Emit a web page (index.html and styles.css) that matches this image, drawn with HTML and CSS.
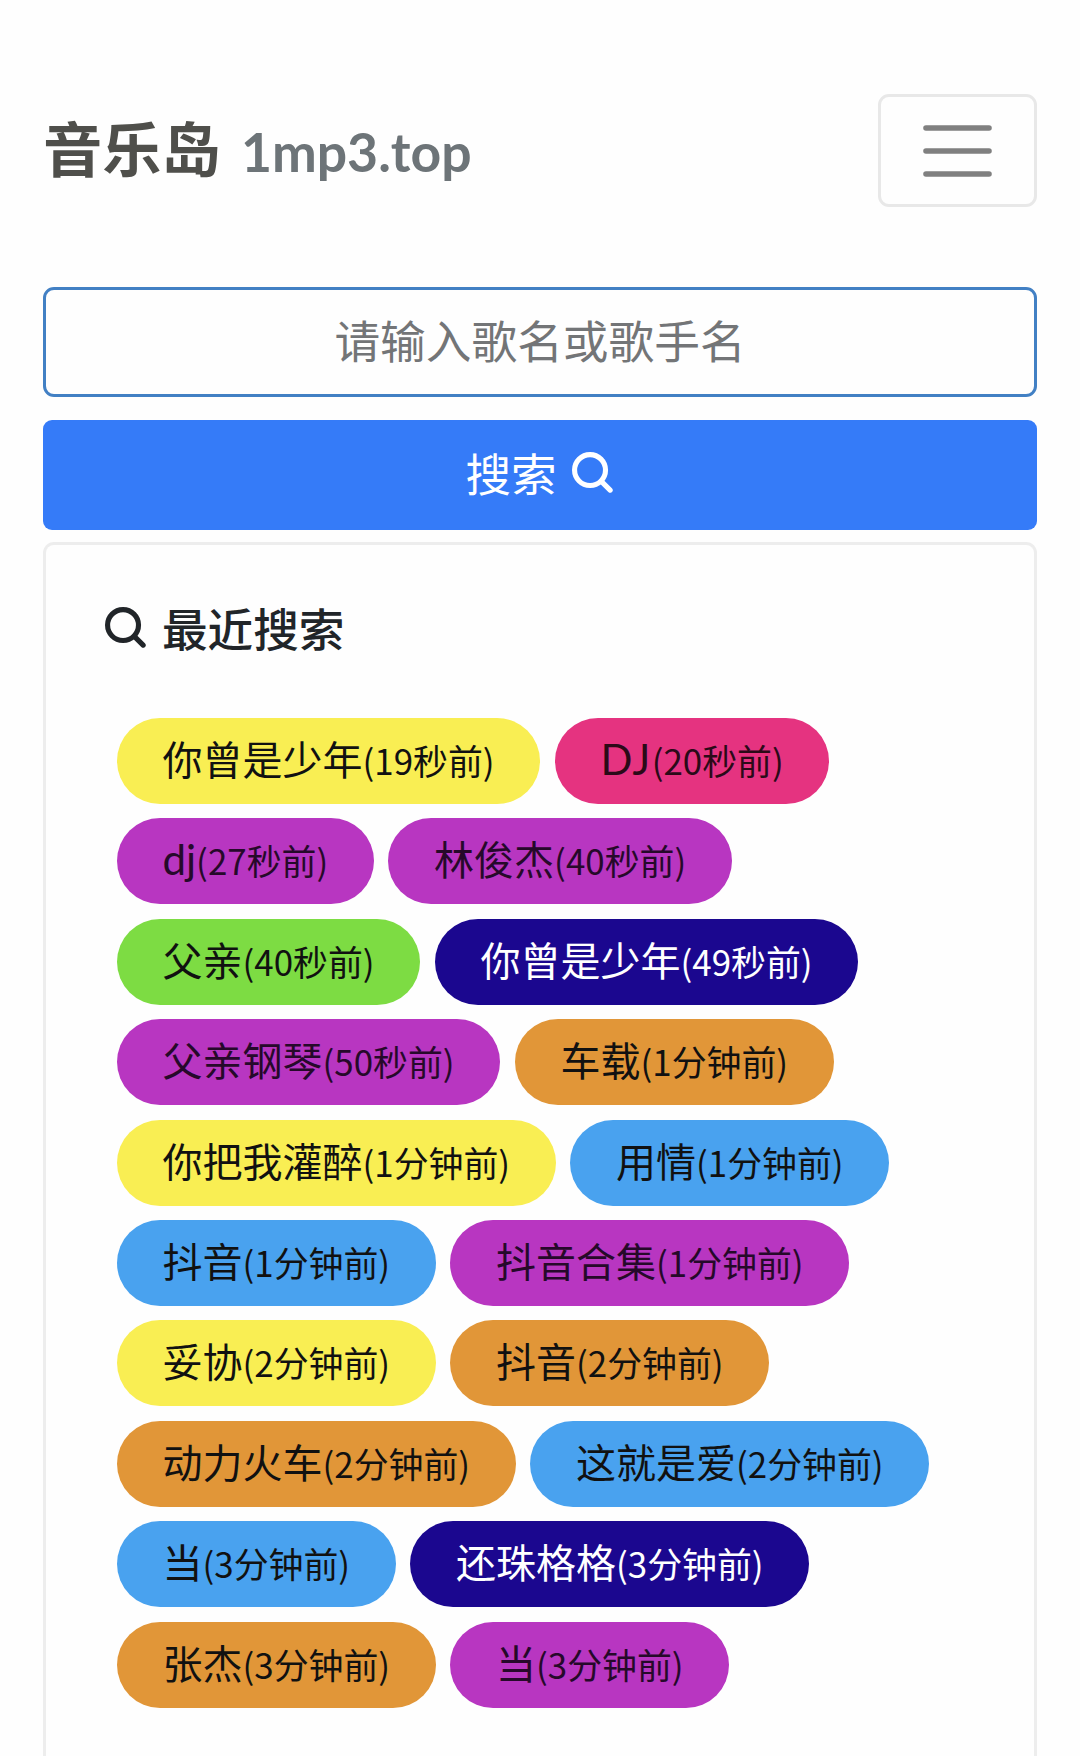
FILE: index.html
```html
<!DOCTYPE html>
<html lang="zh-CN">
<head>
<meta charset="utf-8">
<title>音乐岛 1mp3.top</title>
<link rel="stylesheet" href="styles.css">
</head>
<body>
<header class="navbar">
  <a class="brand"><span class="brand-name">音乐岛</span><span class="brand-domain">1mp3.top</span></a>
  <button class="toggler" aria-label="菜单">
    <svg width="70" height="54" viewBox="0 0 70 54"><path d="M3 4H66M3 27H66M3 50H66" stroke="#808080" stroke-width="5.6" stroke-linecap="round"/></svg>
  </button>
</header>
<main>
  <form class="search">
    <input class="search-input" type="text" placeholder="请输入歌名或歌手名">
    <button class="search-button" type="button"><span>搜索</span><svg class="icon" viewBox="0 0 40 40"><circle cx="17.6" cy="17.6" r="15.1"/><path d="M28.6 28.6L37.2 37.2"/></svg></button>
  </form>
  <section class="card">
    <h2 class="card-title"><svg class="icon" viewBox="0 0 40 40"><circle cx="17.6" cy="17.6" r="15.1"/><path d="M28.6 28.6L37.2 37.2"/></svg><span>最近搜索</span></h2>
    <div class="tags">
      <a class="tag yellow">你曾是少年<small>(19秒前)</small></a>
      <a class="tag pink"><span class="latin caps">DJ</span><small>(20秒前)</small></a>
      <a class="tag purple"><span class="latin">dj</span><small>(27秒前)</small></a>
      <a class="tag purple">林俊杰<small>(40秒前)</small></a>
      <a class="tag green">父亲<small>(40秒前)</small></a>
      <a class="tag navy">你曾是少年<small>(49秒前)</small></a>
      <a class="tag purple">父亲钢琴<small>(50秒前)</small></a>
      <a class="tag orange">车载<small>(1分钟前)</small></a>
      <a class="tag yellow">你把我灌醉<small>(1分钟前)</small></a>
      <a class="tag blue">用情<small>(1分钟前)</small></a>
      <a class="tag blue">抖音<small>(1分钟前)</small></a>
      <a class="tag purple">抖音合集<small>(1分钟前)</small></a>
      <a class="tag yellow">妥协<small>(2分钟前)</small></a>
      <a class="tag orange">抖音<small>(2分钟前)</small></a>
      <a class="tag orange">动力火车<small>(2分钟前)</small></a>
      <a class="tag blue">这就是爱<small>(2分钟前)</small></a>
      <a class="tag blue">当<small>(3分钟前)</small></a>
      <a class="tag navy">还珠格格<small>(3分钟前)</small></a>
      <a class="tag orange">张杰<small>(3分钟前)</small></a>
      <a class="tag purple">当<small>(3分钟前)</small></a>
    </div>
  </section>
</main>
</body>
</html>
```
FILE: styles.css
```css
* { box-sizing: border-box; }
body {
  display: flex;
  flex-direction: column;
  margin: 0;
  height: 1756px;
  padding: 94px 43px 0;
  background: #fefefe;
  color: #212529;
  font-family: "Noto Sans CJK SC", sans-serif;
}
main {
  display: flex;
  flex: 1;
  flex-direction: column;
}
.navbar {
  display: flex;
  justify-content: space-between;
  align-items: center;
  height: 113px;
}
.brand {
  display: flex;
  align-items: baseline;
  gap: 20px;
  padding: 0 0 6px;
  font-weight: 700;
}
.brand-name { font-size: 59.3px; line-height: 1; color: #4f4f4b; }
.brand-domain {
  font-family: Lato, sans-serif;
  font-size: 53.5px;
  line-height: 1;
  color: #6d7478;
}
.toggler {
  display: flex;
  align-items: center;
  justify-content: center;
  width: 159px;
  height: 113px;
  padding: 0;
  border: 3px solid #e8e8e8;
  border-radius: 11px;
  background: none;
}
.search {
  display: flex;
  flex-direction: column;
  gap: 23px;
  margin-top: 80px;
}
.search-input {
  width: 100%;
  height: 110px;
  padding: 0 30px 7px;
  border: 3px solid #4280c4;
  border-radius: 11px;
  background: #fefefe;
  font: 45.7px "Noto Sans CJK SC", sans-serif;
  text-align: center;
}
.search-input::placeholder { color: #737577; opacity: 1; }
.search-button {
  display: flex;
  align-items: center;
  justify-content: center;
  gap: 15px;
  height: 110px;
  padding: 0 2px 5px 0;
  border: 0;
  border-radius: 9px;
  background: #357bf8;
  color: #fff;
  font: 45.6px/1 "Noto Sans CJK SC", sans-serif;
}
.icon {
  width: 41px;
  height: 41px;
  fill: none;
  stroke: currentColor;
  stroke-width: 5;
  stroke-linecap: round;
}
.card {
  flex: 1;
  margin-top: 12px;
  padding: 57px 56px 0 59px;
  border: 3px solid #ededed;
  border-bottom: 0;
  border-radius: 11px 11px 0 0;
}
.card-title {
  display: flex;
  align-items: center;
  gap: 16px;
  height: 50px;
  margin: 0;
  font-size: 45.6px;
  font-weight: 500;
  line-height: 50px;
}
.tags {
  display: flex;
  flex-wrap: wrap;
  gap: 14.4px;
  margin-top: 66px;
  padding-left: 11.5px;
}
.tag {
  display: block;
  height: 86px;
  padding: 0 45.5px 0 46px;
  border-radius: 43px;
  color: #111;
  font-size: 40px;
  line-height: 81px;
  white-space: nowrap;
}
.tag small { font-size: 34.9px; }
.latin { font-family: Lato, sans-serif; font-size: 42px; }
.caps { letter-spacing: 1.5px; }
.yellow { background: #f9ee53; }
.pink { background: #e53380; color: #2b0a18; }
.purple { background: #b836c1; color: #26092a; }
.green { background: #7ddc43; }
.navy { background: #1b078f; color: #fff; }
.orange { background: #e19638; }
.blue { background: #49a2ef; }
```
